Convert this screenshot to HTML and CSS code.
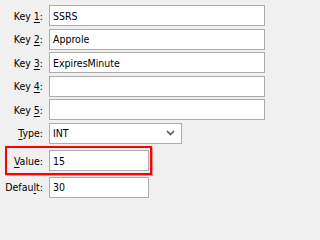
FILE: index.html
```html
<!DOCTYPE html>
<html>
<head>
<meta charset="utf-8">
<link rel="stylesheet" href="styles.css">
</head>
<body>
<div class="form">
  <div class="row"><span class="lbl">Key <u>1</u>:</span><div class="inp wide">SSRS</div></div>
  <div class="row"><span class="lbl">Key <u>2</u>:</span><div class="inp wide">Approle</div></div>
  <div class="row"><span class="lbl">Key <u>3</u>:</span><div class="inp wide">ExpiresMinute</div></div>
  <div class="row"><span class="lbl">Key <u>4</u>:</span><div class="inp wide"></div></div>
  <div class="row"><span class="lbl">Key <u>5</u>:</span><div class="inp wide"></div></div>
  <div class="row"><span class="lbl"><u>T</u>ype:</span><div class="inp sel"><span>INT</span><svg class="chev" width="9" height="6" viewBox="0 0 9 6"><path d="M1 1 L4.5 4.5 L8 1" fill="none" stroke="#555" stroke-width="1.6"/></svg></div></div>
  <div class="hl">
    <div class="row"><span class="lbl lbl-hl"><u>V</u>alue:</span><div class="inp short">15</div></div>
  </div>
  <div class="row"><span class="lbl">Defau<u>l</u>t:</span><div class="inp short">30</div></div>
</div>
</body>
</html>
```
FILE: styles.css
```css
html, body {
  margin: 0;
  padding: 0;
  background: #f0f0f0;
}
body {
  width: 272px;
  height: 202px;
  overflow: hidden;
  font-family: "DejaVu Sans Condensed", "DejaVu Sans", sans-serif;
  font-size: 10.5px;
  color: #000;
}
.form {
  display: flex;
  flex-direction: column;
  gap: 2.5px;
  padding-top: 5px;
}
.row {
  display: flex;
  align-items: center;
  height: 21px;
}
.lbl {
  width: 43px;
  padding-right: 6px;
  text-align: right;
  white-space: nowrap;
  color: #000;
}
.lbl u {
  text-decoration-thickness: 1px;
  text-underline-offset: 2px;
}
.inp {
  box-sizing: border-box;
  height: 21px;
  border: 1px solid #acacac;
  background: #fff;
  padding-left: 3px;
  display: flex;
  align-items: center;
}
.wide { width: 216px; }
.short { width: 100px; }
.sel {
  width: 133px;
  justify-content: space-between;
  padding-right: 6px;
}
.chev { display: block; }
.hl {
  align-self: flex-start;
  margin-left: 5px;
  margin-bottom: -1px;
  border: 2px solid #f00;
  padding: 2px 1px 2px 0;
  box-shadow: 0 0 1px 0.5px rgba(255, 80, 80, 0.6);
}
.lbl-hl {
  width: 36px;
}
```
